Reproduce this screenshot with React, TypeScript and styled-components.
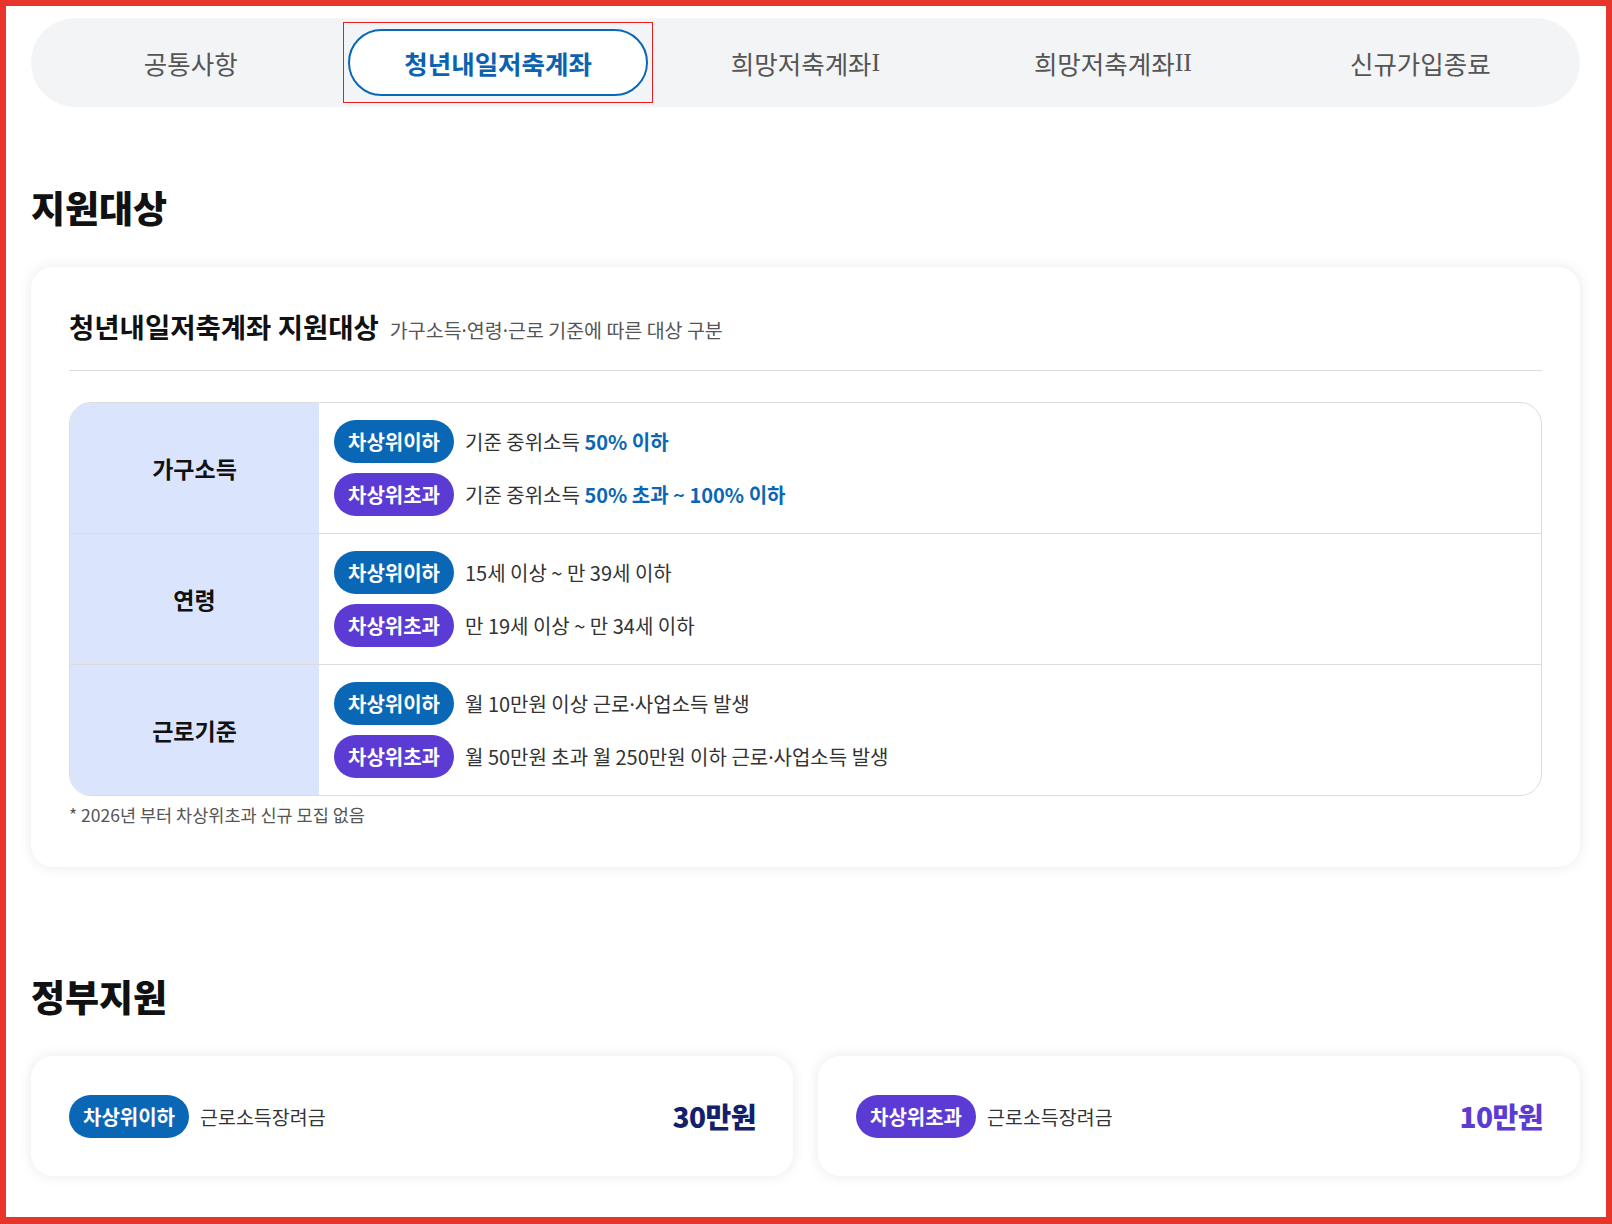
import React from 'react'
import styled, { createGlobalStyle } from 'styled-components'

const GlobalStyle = createGlobalStyle`
  * { box-sizing: border-box; }
  html, body { margin: 0; padding: 0; background: #fff; }
  body {
    font-family: "Noto Sans CJK KR", "Noto Sans", sans-serif;
    color: #111;
  }
`

const Frame = styled.div`
  width: 1612px;
  min-height: 1224px;
  border: 6px solid #e8352b;
  border-bottom-width: 7px;
  padding: 12px 26px 40px 25px;
  background: #fff;
`

const TabBar = styled.ul`
  display: flex;
  margin: 0;
  padding: 5px 6px;
  list-style: none;
  background: #f3f4f6;
  border-radius: 45px;
  height: 89px;
`

const TabCell = styled.li<{ $active?: boolean }>`
  flex: 1;
  display: flex;
  padding: 6px 4px;
  outline: ${(p) => (p.$active ? '1px solid #ee1c1c' : 'none')};
`

const TabButton = styled.button<{ $active?: boolean }>`
  flex: 1;
  display: flex;
  align-items: center;
  justify-content: center;
  border-radius: 40px;
  border: ${(p) => (p.$active ? '2.5px solid #0a67b6' : '2.5px solid transparent')};
  background: ${(p) => (p.$active ? '#fff' : 'transparent')};
  color: ${(p) => (p.$active ? '#0a62b0' : '#555')};
  font-family: "Noto Sans CJK KR", sans-serif;
  font-size: 25.5px;
  font-weight: ${(p) => (p.$active ? 700 : 400)};
  cursor: pointer;
  padding: 0;
`

const Roman = styled.span`
  font-family: "Liberation Serif", serif;
  font-size: 26px;
`

// narrow latin middot instead of the full-width CJK one
const Dot = styled.span`
  font-family: "Noto Sans", sans-serif;
`

const SectionTitle = styled.h2<{ $top: number }>`
  margin: ${(p) => p.$top}px 0 38px 0;
  font-size: 37px;
  line-height: 44px;
  font-weight: 800;
  color: #111;
`

const Card = styled.section`
  background: #fff;
  border-radius: 22px;
  box-shadow: 0 0 14px rgba(0, 0, 0, 0.09);
  padding: 41px 38px 40px;
`

const CardHead = styled.div`
  display: flex;
  align-items: baseline;
  gap: 11px;
  padding-bottom: 25px;
  border-bottom: 1px solid #dcdcdc;
  margin-bottom: 31px;
`

const CardTitle = styled.h3`
  margin: 0;
  font-size: 27.5px;
  line-height: 37px;
  font-weight: 700;
  color: #111;
`

const CardSub = styled.span`
  font-size: 19.5px;
  color: #555;
`

const Table = styled.div`
  border: 1px solid #dcdcdc;
  border-radius: 22px;
  overflow: hidden;
`

const Row = styled.div`
  display: grid;
  grid-template-columns: 249px 1fr;
  & + & {
    border-top: 1px solid #dcdcdc;
  }
`

const RowHead = styled.div`
  background: #dae4fd;
  display: flex;
  align-items: center;
  justify-content: center;
  font-size: 23px;
  font-weight: 700;
  color: #111;
`

const RowBody = styled.div`
  display: flex;
  flex-direction: column;
  gap: 10px;
  padding: 17px 15px;
`

const Line = styled.div`
  display: flex;
  align-items: center;
  gap: 11px;
  font-size: 20px;
  color: #333;
`

const Badge = styled.span<{ $kind: 'low' | 'over' }>`
  display: inline-flex;
  align-items: center;
  justify-content: center;
  height: 43px;
  padding: 0 14px;
  border-radius: 22px;
  background: ${(p) => (p.$kind === 'low' ? '#0a67b5' : '#5c3bd4')};
  color: #fff;
  font-size: 20px;
  font-weight: 700;
  white-space: nowrap;
`

const Em = styled.strong`
  color: #0a67b5;
  font-weight: 700;
`

const Note = styled.p`
  margin: 7px 0 0;
  font-size: 17.5px;
  line-height: 24px;
  color: #555;
`

const SupportGrid = styled.div`
  display: grid;
  grid-template-columns: 1fr 1fr;
  gap: 25px;
`

const SupportCard = styled.div`
  height: 120px;
  display: flex;
  align-items: center;
  gap: 11px;
  padding: 0 37px 0 38px;
  background: #fff;
  border-radius: 22px;
  box-shadow: 0 0 14px rgba(0, 0, 0, 0.09);
`

const SupportLabel = styled.span`
  flex: 1;
  font-size: 19.5px;
  color: #333;
`

const Amount = styled.span<{ $kind: 'low' | 'over' }>`
  font-size: 28px;
  font-weight: 800;
  letter-spacing: -0.5px;
  color: ${(p) => (p.$kind === 'low' ? '#13206b' : '#5c3bd4')};
`

const tabs = ['공통사항', '청년내일저축계좌', '희망저축계좌', '희망저축계좌', '신규가입종료']
const romans = ['', '', 'I', 'II', '']

type Item = { kind: 'low' | 'over'; text: React.ReactNode }

const rows: { head: string; items: Item[] }[] = [
  {
    head: '가구소득',
    items: [
      { kind: 'low', text: <>기준 중위소득 <Em>50% 이하</Em></> },
      { kind: 'over', text: <>기준 중위소득 <Em>50% 초과 ~ 100% 이하</Em></> },
    ],
  },
  {
    head: '연령',
    items: [
      { kind: 'low', text: '15세 이상 ~ 만 39세 이하' },
      { kind: 'over', text: '만 19세 이상 ~ 만 34세 이하' },
    ],
  },
  {
    head: '근로기준',
    items: [
      { kind: 'low', text: <>월 10만원 이상 근로<Dot>·</Dot>사업소득 발생</> },
      { kind: 'over', text: <>월 50만원 초과 월 250만원 이하 근로<Dot>·</Dot>사업소득 발생</> },
    ],
  },
]

const badgeText = { low: '차상위이하', over: '차상위초과' }

export default function App() {
  return (
    <>
      <GlobalStyle />
      <Frame>
        <TabBar>
          {tabs.map((t, i) => (
            <TabCell key={i} $active={i === 1}>
              <TabButton $active={i === 1}>
                {t}
                {romans[i] && <Roman>{romans[i]}</Roman>}
              </TabButton>
            </TabCell>
          ))}
        </TabBar>

        <SectionTitle $top={78}>지원대상</SectionTitle>
        <Card>
          <CardHead>
            <CardTitle>청년내일저축계좌 지원대상</CardTitle>
            <CardSub>
              가구소득<Dot>·</Dot>연령<Dot>·</Dot>근로 기준에 따른 대상 구분
            </CardSub>
          </CardHead>
          <Table>
            {rows.map((r) => (
              <Row key={r.head}>
                <RowHead>{r.head}</RowHead>
                <RowBody>
                  {r.items.map((it, j) => (
                    <Line key={j}>
                      <Badge $kind={it.kind}>{badgeText[it.kind]}</Badge>
                      <span>{it.text}</span>
                    </Line>
                  ))}
                </RowBody>
              </Row>
            ))}
          </Table>
          <Note>* 2026년 부터 차상위초과 신규 모집 없음</Note>
        </Card>

        <SectionTitle $top={107}>정부지원</SectionTitle>
        <SupportGrid>
          <SupportCard>
            <Badge $kind="low">차상위이하</Badge>
            <SupportLabel>근로소득장려금</SupportLabel>
            <Amount $kind="low">30만원</Amount>
          </SupportCard>
          <SupportCard>
            <Badge $kind="over">차상위초과</Badge>
            <SupportLabel>근로소득장려금</SupportLabel>
            <Amount $kind="over">10만원</Amount>
          </SupportCard>
        </SupportGrid>
      </Frame>
    </>
  )
}
